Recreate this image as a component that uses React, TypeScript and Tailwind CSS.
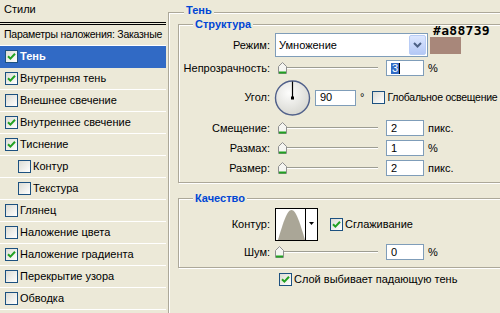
import React from 'react';

const Check = ({ on }: { on?: boolean }) => (
    <span className="flex h-[13px] w-[13px] shrink-0 items-center justify-center border border-[#1c5180] bg-linear-to-br from-[#dcdcd5] to-white">
        {on && (
            <svg width="9" height="9" viewBox="0 0 9 9">
                <path d="M1 4.2 L3.4 6.6 L8 1.8" stroke="#21a121" strokeWidth="2" fill="none" />
            </svg>
        )}
    </span>
);

const Slider = ({ at = 3 }: { at?: number }) => (
    <div className="relative h-[13px] w-[106px] shrink-0">
        <div className="absolute left-[8px] top-[5px] h-[2px] w-[95px] border-t border-[#9d9d92] bg-white" />
        <svg className="absolute top-0" style={{ left: at }} width="9" height="12" viewBox="0 0 9 12">
            <path d="M4.5 0.5 L8.5 4.5 L8.5 11.5 L0.5 11.5 L0.5 4.5 Z" fill="#f5f5f1" stroke="#8e8f8f" />
            <rect x="1" y="9.5" width="7" height="2" fill="#21a121" />
        </svg>
    </div>
);

const Field = ({ v, sel, w = 'w-[38px]' }: { v: string; sel?: boolean; w?: string }) => (
    <div className={`flex h-4 ${w} shrink-0 items-center border border-[#7f9db9] bg-white pl-[4px] leading-none`}>
        {sel ? <span className="border-r border-black bg-[#316ac5] px-[1px] text-white">{v}</span> : v}
    </div>
);

const Label = ({ children }: { children: React.ReactNode }) => (
    <div className="w-[91px] shrink-0 whitespace-nowrap text-right">{children}</div>
);

const items: { t: string; on?: boolean; sub?: boolean; sel?: boolean }[] = [
    { t: 'Тень', on: true, sel: true },
    { t: 'Внутренняя тень', on: true },
    { t: 'Внешнее свечение' },
    { t: 'Внутреннее свечение', on: true },
    { t: 'Тиснение', on: true },
    { t: 'Контур', sub: true },
    { t: 'Текстура', sub: true },
    { t: 'Глянец' },
    { t: 'Наложение цвета' },
    { t: 'Наложение градиента', on: true },
    { t: 'Перекрытие узора' },
    { t: 'Обводка' },
];

const etched = 'border border-[#aca899] shadow-[inset_1px_1px_0_#fff,1px_1px_0_#fff]';
const legend = 'absolute bg-[#ece9d8] px-[2px] font-bold leading-[13px] text-[#0046d5]';

export default function App() {
    return (
        <div className="flex h-[313px] w-[500px] overflow-hidden bg-[#ece9d8] font-['Liberation_Sans',Arial,sans-serif] text-[11px] text-black">
            {/* Styles list */}
            <div className="w-[166px] shrink-0 overflow-hidden">
                <div className="h-[22px] pl-[4px] pt-[3px] leading-[13px]">Стили</div>
                <div className="h-[3px] border-y border-black" />
                <div className="flex h-[21px] items-center whitespace-nowrap border-b border-white pl-[4px] text-[10.5px] tracking-[-0.25px]">Параметры наложения: Заказные</div>
                {items.map((it) => (
                    <div
                        key={it.t}
                        className={`flex h-[22px] items-center gap-[2px] whitespace-nowrap border-b ${it.sel ? 'border-[#316ac5] bg-[#316ac5] font-bold text-white' : 'border-white'} ${it.sub ? 'pl-[18px]' : 'pl-[5px]'}`}
                    >
                        <Check on={it.on} />
                        <span>{it.t}</span>
                    </div>
                ))}
            </div>

            {/* Shadow settings */}
            <div className="pl-[2px] pt-[12px]">
                <div className={`relative h-[320px] w-[360px] ${etched} pl-[9px] pt-[11px]`}>
                    <span className={`${legend} -top-[9px] left-[15px]`}>Тень</span>

                    <div className={`relative w-[340px] ${etched} pb-[6px] pt-[8px]`}>
                        <span className={`${legend} -top-[7px] left-[14px]`}>Структура</span>

                        <div className="flex h-[24px] items-center">
                            <Label>Режим:</Label>
                            <div className="ml-[5px] flex h-[24px] w-[153px] items-center border border-[#7f9db9] bg-white">
                                <span className="flex-1 pl-[3px]">Умножение</span>
                                <div className="m-[1px] flex w-[17px] self-stretch items-center justify-center rounded-[2px] border border-[#b9cdf6] bg-linear-to-b from-[#dce7ff] to-[#b4c8f5]">
                                    <svg width="9" height="6" viewBox="0 0 9 6">
                                        <path d="M1 1 L4.5 4.5 L8 1" stroke="#4d6185" strokeWidth="2" fill="none" />
                                    </svg>
                                </div>
                            </div>
                            <div className="relative ml-[2px] h-[17px] w-[31px] bg-[#a8877a]">
                                <span className="absolute -top-[12.5px] left-[3px] font-['DejaVu_Sans_Mono',monospace] text-[13px] font-bold leading-none tracking-[0.3px]">#a88739</span>
                            </div>
                        </div>

                        <div className="mt-[3px] flex h-4 items-center">
                            <Label>Непрозрачность:</Label>
                            <div className="ml-[5px]"><Slider /></div>
                            <div className="ml-[5px]"><Field v="3" sel /></div>
                            <span className="ml-[4px]">%</span>
                        </div>

                        <div className="mt-[4px] flex h-[35px] items-center">
                            <Label>Угол:</Label>
                            <svg className="ml-[4px]" width="37" height="36" viewBox="0 0 37 36">
                                <defs>
                                    <radialGradient id="dial" cx="40%" cy="35%" r="70%">
                                        <stop offset="0" stopColor="#fdfdfc" />
                                        <stop offset="1" stopColor="#d6d6d0" />
                                    </radialGradient>
                                </defs>
                                <circle cx="18.5" cy="18" r="17" fill="url(#dial)" stroke="#50608a" strokeWidth="1.4" />
                                <line x1="18.5" y1="18" x2="18.5" y2="1.5" stroke="#000" strokeWidth="1.2" />
                                <rect x="17" y="16.5" width="3" height="3" fill="#000" />
                            </svg>
                            <div className="ml-[4px]"><Field v="90" w="w-[41px]" /></div>
                            <span className="ml-[4px]">°</span>
                            <div className="ml-[8px]"><Check /></div>
                            <span className="ml-[2px] whitespace-nowrap text-[10.5px] tracking-[-0.25px]">Глобальное освещение</span>
                        </div>

                        {[
                            ['Смещение:', '2', 'пикс.'],
                            ['Размах:', '1', '%'],
                            ['Размер:', '2', 'пикс.'],
                        ].map(([l, v, u], i) => (
                            <div key={l} className={`flex h-4 items-center ${i === 0 ? 'mt-[5px]' : 'mt-[4px]'}`}>
                                <Label>{l}</Label>
                                <div className="ml-[5px]"><Slider /></div>
                                <div className="ml-[5px]"><Field v={v} /></div>
                                <span className="ml-[4px]">{u}</span>
                            </div>
                        ))}
                    </div>

                    <div className={`relative mt-[15px] w-[340px] ${etched} pb-[7px] pt-[9px]`}>
                        <span className={`${legend} -top-[7px] left-[14px]`}>Качество</span>

                        <div className="flex h-[33px] items-center">
                            <Label>Контур:</Label>
                            <div className="ml-[5px] flex h-[33px] w-[43px] border border-black bg-white">
                                <svg width="29" height="31" viewBox="0 0 29 31">
                                    <path d="M2 31 C7 14, 11 1, 15.5 1 C20 1, 24 14, 29 31 Z" fill="#aaa697" />
                                </svg>
                                <div className="flex flex-1 items-center justify-center border-l border-black pb-[3px]">
                                    <svg width="5" height="3" viewBox="0 0 5 3">
                                        <path d="M0 0 L5 0 L2.5 3 Z" fill="#000" />
                                    </svg>
                                </div>
                            </div>
                            <div className="ml-[12px]"><Check on /></div>
                            <span className="ml-[2px]">Сглаживание</span>
                        </div>

                        <div className="mt-[3px] flex h-4 items-center">
                            <Label>Шум:</Label>
                            <div className="ml-[5px]"><Slider at={0} /></div>
                            <div className="ml-[5px]"><Field v="0" /></div>
                            <span className="ml-[4px]">%</span>
                        </div>
                    </div>

                    <div className="ml-[101px] mt-[5px] flex h-[13px] items-center">
                        <Check on />
                        <span className="ml-[2px] whitespace-nowrap">Слой выбивает падающую тень</span>
                    </div>
                </div>
            </div>
        </div>
    );
}
